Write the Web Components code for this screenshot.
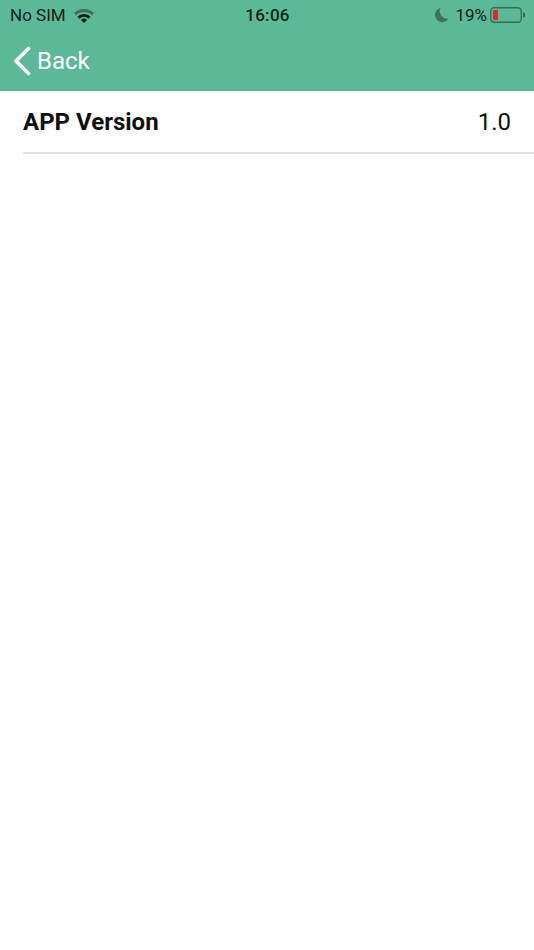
<!DOCTYPE html>
<html>
<head>
<meta charset="utf-8">
<style>
  html, body { margin: 0; height: 100%; background: #fff; }
  body { font-family: Roboto, "Noto Sans", sans-serif; color: #0b0f0d; }
</style>
</head>
<body>
<app-header></app-header>
<info-row label="APP Version" value="1.0"></info-row>

<script>
class StatusBar extends HTMLElement {
  constructor() {
    super();
    this.attachShadow({ mode: 'open' });
    this.shadowRoot.innerHTML = `
      <style>
        :host {
          display: grid;
          grid-template-columns: 1fr auto 1fr;
          align-items: center;
          height: 30px;
          padding: 0 9px 0 10px;
          font-size: 17px;
          color: #0d1f18;
        }
        .left, .right { display: flex; align-items: center; }
        .left { gap: 7px; }
        .right { justify-content: flex-end; }
        .time { font-weight: 500; letter-spacing: 0.3px; }
        .moon { margin-right: 6px; }
        .pct { margin-right: 3px; }
        svg { display: block; }
      </style>
      <div class="left">
        <span>No SIM</span>
        <svg width="22" height="16" viewBox="0 0 22 16">
          <path d="M1 6a14.5 14.5 0 0 1 20 0l-2 2.2a11.6 11.6 0 0 0-16 0z" fill="#3f6f5d"/>
          <path d="M4.4 9.6a9.6 9.6 0 0 1 13.2 0l-2 2.1a6.7 6.7 0 0 0-9.2 0z" fill="#0d1f18"/>
          <path d="M8 13a4.4 4.4 0 0 1 6 0l-3 3z" fill="#0d1f18"/>
        </svg>
      </div>
      <div class="time">16:06</div>
      <div class="right">
        <svg class="moon" width="15" height="16" viewBox="0 0 15 16">
          <path d="M6.5 1a7.2 7.2 0 1 0 8 10.5A7.4 7.4 0 0 1 6.5 1z" fill="#41705f"/>
        </svg>
        <span class="pct">19%</span>
        <svg width="35" height="16" viewBox="0 0 35 16">
          <rect x="0.75" y="0.75" width="30.5" height="14.5" rx="3.5" fill="none" stroke="#3f6657" stroke-width="1.3"/>
          <rect x="3" y="3" width="5" height="10" rx="1" fill="#ff1a1f"/>
          <path d="M33 5.5a2.5 2.5 0 0 1 0 5z" fill="#3f6657"/>
        </svg>
      </div>
    `;
  }
}

class AppHeader extends HTMLElement {
  constructor() {
    super();
    this.attachShadow({ mode: 'open' });
    this.shadowRoot.innerHTML = `
      <style>
        :host {
          display: block;
          height: 91px;
          background: #5bb997;
        }
        nav {
          display: flex;
          align-items: center;
          gap: 6px;
          height: 61px;
          padding-left: 13px;
          color: #fff;
          font-size: 24px;
        }
        svg { display: block; }
      </style>
      <status-bar></status-bar>
      <nav>
        <svg width="18" height="30" viewBox="0 0 18 30">
          <path d="M15.5 2.5 3 15l12.5 12.5" fill="none" stroke="#fff" stroke-width="3.6" stroke-linecap="round" stroke-linejoin="round"/>
        </svg>
        <span>Back</span>
      </nav>
    `;
  }
}

class InfoRow extends HTMLElement {
  constructor() {
    super();
    this.attachShadow({ mode: 'open' });
    this.shadowRoot.innerHTML = `
      <style>
        :host { display: block; padding-left: 23px; }
        .row {
          display: flex;
          justify-content: space-between;
          align-items: center;
          height: 61px;
          padding-right: 23px;
          border-bottom: 2px solid #e0e2e1;
        }
        .label { font-size: 24px; font-weight: 700; }
        .value { font-size: 24px; }
      </style>
      <div class="row">
        <span class="label">${this.getAttribute('label')}</span>
        <span class="value">${this.getAttribute('value')}</span>
      </div>
    `;
  }
}

customElements.define('status-bar', StatusBar);
customElements.define('app-header', AppHeader);
customElements.define('info-row', InfoRow);
</script>
</body>
</html>
